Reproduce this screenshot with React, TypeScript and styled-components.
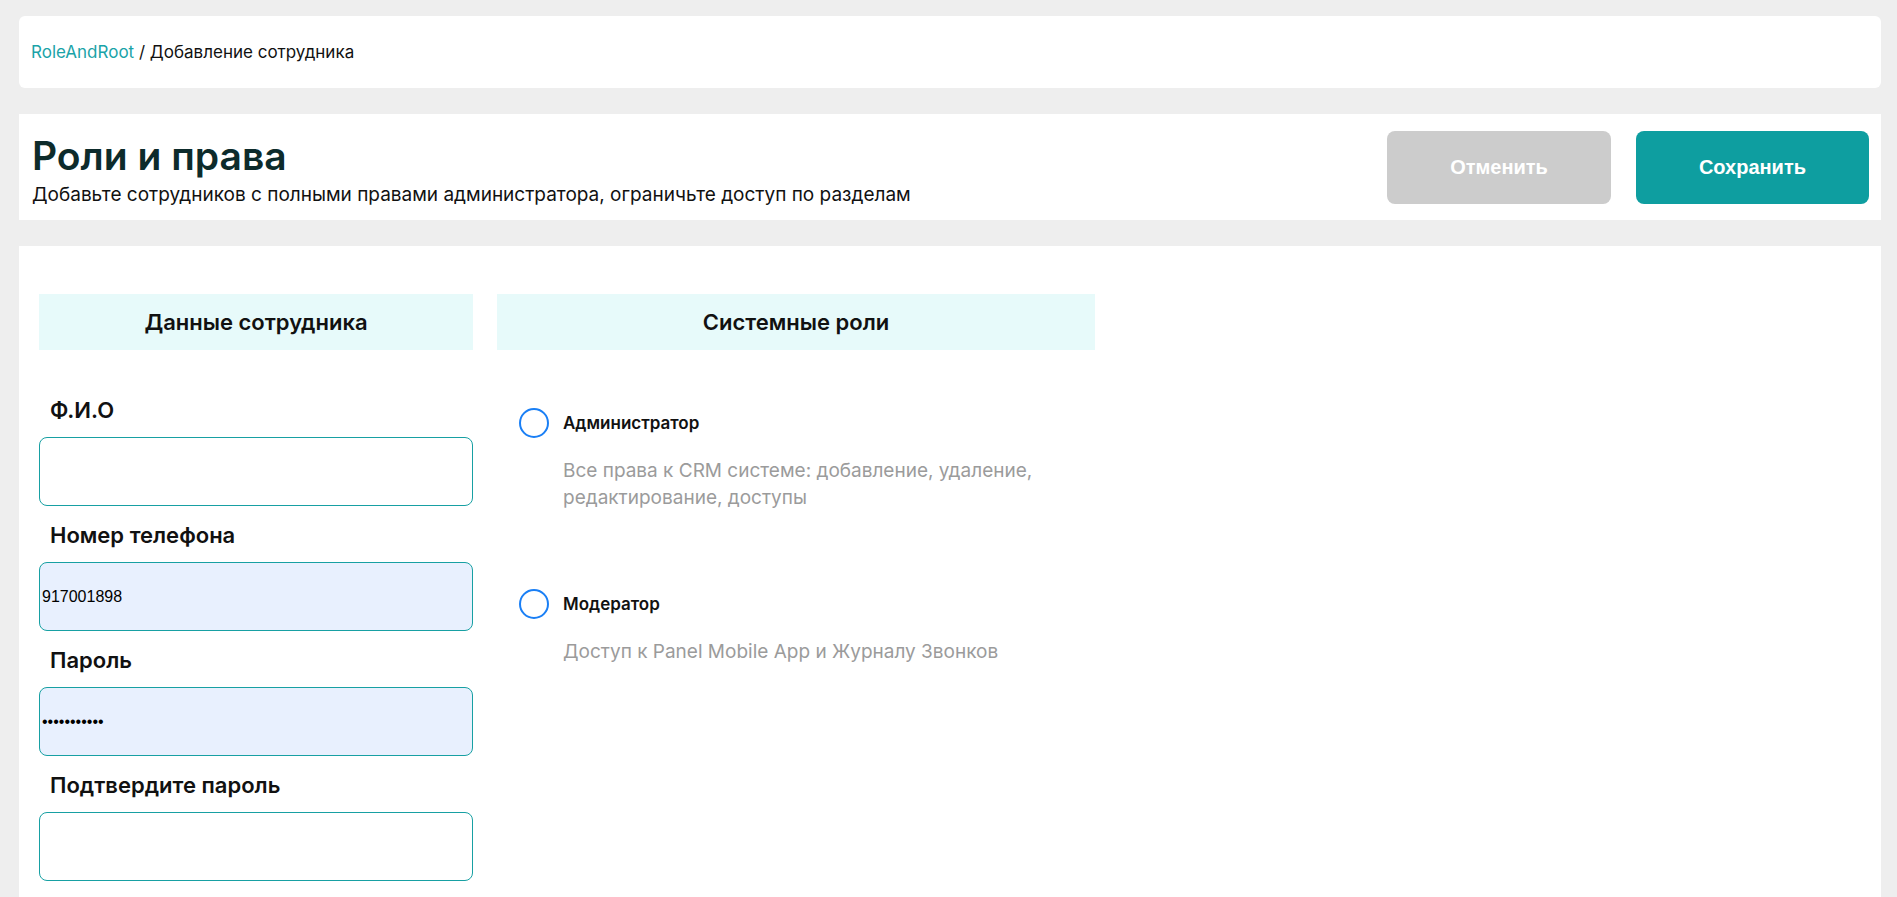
import React from "react";
import styled, { createGlobalStyle } from "styled-components";

const GlobalStyle = createGlobalStyle`
  * { box-sizing: border-box; }
  html, body { margin: 0; padding: 0; background: #eeeeee; }
  body { font-family: "Inter", "Noto Sans", sans-serif; color: #111; }
`;

const Page = styled.div`
  display: flex;
  flex-direction: column;
  gap: 26px;
  padding: 16px 16px 0 19px;
  min-height: 897px;
`;

const BreadcrumbCard = styled.nav`
  height: 72px;
  background: #fff;
  border-radius: 6px;
  display: flex;
  align-items: center;
  padding: 0 12px;
  font-size: 17px;
  color: #111;
`;

const Crumb = styled.a`
  color: #1aa3a8;
  text-decoration: none;
`;

const HeaderCard = styled.header`
  height: 106px;
  background: #fff;
  display: flex;
  justify-content: space-between;
  align-items: flex-start;
  padding: 19px 12px 0 13px;
`;

const TitleBlock = styled.div`
  display: flex;
  flex-direction: column;
  gap: 4px;
`;

const Title = styled.h1`
  margin: 0;
  font-size: 39px;
  line-height: 46px;
  font-weight: 600;
  color: #0d2b2b;
`;

const Subtitle = styled.p`
  margin: 0;
  font-size: 19px;
  line-height: 24px;
  color: #111;
`;

const Actions = styled.div`
  display: flex;
  gap: 25px;
  align-self: center;
  margin-top: -19px;
`;

const ActionButton = styled.button<{ $primary?: boolean }>`
  height: 73px;
  padding: 0 63px;
  border: none;
  border-radius: 8px;
  background: ${(p) => (p.$primary ? "#0e9ea0" : "#cccccc")};
  color: #fff;
  font-family: "Liberation Sans", Arial, sans-serif;
  font-weight: 700;
  font-size: 20px;
  cursor: pointer;
`;

const MainCard = styled.main`
  flex: 1;
  background: #fff;
  padding: 48px 20px;
  display: grid;
  grid-template-columns: 434px 598px;
  column-gap: 24px;
  align-items: start;
`;

const Column = styled.section`
  display: flex;
  flex-direction: column;
`;

const SectionHeader = styled.h2`
  margin: 0;
  height: 56px;
  background: #e7fafa;
  display: flex;
  align-items: center;
  justify-content: center;
  font-size: 22px;
  font-weight: 600;
  color: #111;
`;

const Fields = styled.div`
  display: flex;
  flex-direction: column;
  padding-top: 31px;
`;

const Label = styled.label`
  display: block;
  margin: 11px 0 9px;
  padding-left: 11px;
  font-size: 22px;
  line-height: 36px;
  font-weight: 600;
  color: #111;
`;

const Input = styled.input<{ $filled?: boolean }>`
  display: block;
  width: 100%;
  height: 69px;
  padding: 1px 2px;
  border: 1px solid #17a0a3;
  border-radius: 8px;
  outline: none;
  background: ${(p) => (p.$filled ? "#e8f0fe" : "#fff")};
  font-family: "Liberation Sans", Arial, sans-serif;
  font-size: 16px;
  color: #000;
`;

const RoleList = styled.div`
  display: flex;
  flex-direction: column;
  gap: 78px;
  padding: 58px 0 0 22px;
`;

const Role = styled.div`
  display: flex;
  flex-direction: column;
  gap: 19px;
`;

const RoleRow = styled.label`
  display: flex;
  align-items: center;
  gap: 14px;
  font-size: 17px;
  font-weight: 600;
  color: #111;
  cursor: pointer;
`;

const Radio = styled.input`
  appearance: none;
  margin: 0;
  width: 30px;
  height: 30px;
  border: 2px solid #1a7ff5;
  border-radius: 50%;
  background: #fff;
  flex: none;
`;

const RoleDescription = styled.p`
  margin: 0;
  padding-left: 44px;
  max-width: 560px;
  font-size: 19px;
  line-height: 27px;
  color: #9b9b9b;
`;

const fields = [
  { label: "Ф.И.О", type: "text", value: "" },
  { label: "Номер телефона", type: "text", value: "917001898" },
  { label: "Пароль", type: "password", value: "qwerty12345" },
  { label: "Подтвердите пароль", type: "password", value: "" },
];

const roles = [
  {
    name: "Администратор",
    description: "Все права к CRM системе: добавление, удаление, редактирование, доступы",
  },
  {
    name: "Модератор",
    description: "Доступ к Panel Mobile App и Журналу Звонков",
  },
];

export default function App() {
  return (
    <>
      <GlobalStyle />
      <Page>
        <BreadcrumbCard>
          <Crumb href="#">RoleAndRoot</Crumb>&nbsp;/ Добавление сотрудника
        </BreadcrumbCard>
        <HeaderCard>
          <TitleBlock>
            <Title>Роли и права</Title>
            <Subtitle>
              Добавьте сотрудников с полными правами администратора, ограничьте доступ по разделам
            </Subtitle>
          </TitleBlock>
          <Actions>
            <ActionButton type="button">Отменить</ActionButton>
            <ActionButton type="button" $primary>
              Сохранить
            </ActionButton>
          </Actions>
        </HeaderCard>
        <MainCard>
          <Column>
            <SectionHeader>Данные сотрудника</SectionHeader>
            <Fields>
              {fields.map((f, i) => (
                <div key={f.label}>
                  <Label htmlFor={`field-${i}`}>{f.label}</Label>
                  <Input
                    id={`field-${i}`}
                    type={f.type}
                    defaultValue={f.value}
                    $filled={f.value !== ""}
                  />
                </div>
              ))}
            </Fields>
          </Column>
          <Column>
            <SectionHeader>Системные роли</SectionHeader>
            <RoleList>
              {roles.map((r) => (
                <Role key={r.name}>
                  <RoleRow>
                    <Radio type="radio" name="role" />
                    {r.name}
                  </RoleRow>
                  <RoleDescription>{r.description}</RoleDescription>
                </Role>
              ))}
            </RoleList>
          </Column>
        </MainCard>
      </Page>
    </>
  );
}
